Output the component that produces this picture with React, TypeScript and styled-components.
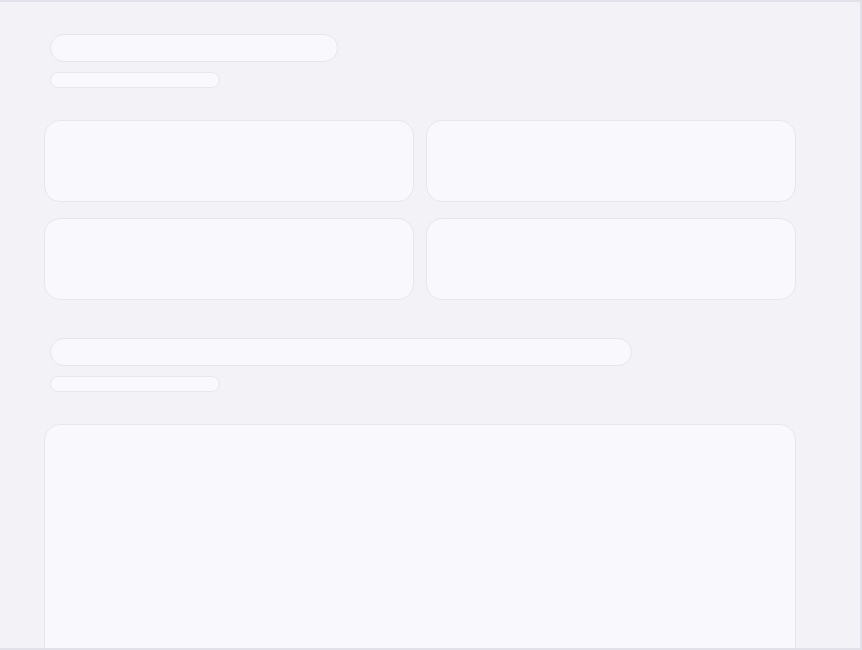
import React from 'react'
import styled, { createGlobalStyle } from 'styled-components'

const GlobalStyle = createGlobalStyle`
  html, body {
    margin: 0;
    padding: 0;
    background: #f3f2f7;
    font-family: 'Inter', 'Noto Sans', sans-serif;
  }
`

const Frame = styled.div`
  box-sizing: border-box;
  width: 862px;
  height: 650px;
  overflow: hidden;
  background: #f3f2f7;
  border-top: 2px solid #e2e1e9;
  border-right: 2px solid #e2e1e9;
  border-bottom: 2px solid #e2e1e9;
  padding: 32px 64px 0 44px;
  display: flex;
  flex-direction: column;
`

const Header = styled.div`
  display: flex;
  flex-direction: column;
  gap: 10px;
  padding: 0 6px;
`

const Pill = styled.div<{ $width: number; $height: number }>`
  box-sizing: border-box;
  width: ${({ $width }) => $width}px;
  height: ${({ $height }) => $height}px;
  border-radius: ${({ $height }) => $height / 2}px;
  background: #f9f8fd;
  border: 1px solid #e7e6ed;
`

const CardGrid = styled.div`
  display: grid;
  grid-template-columns: 1fr 1fr;
  column-gap: 12px;
  row-gap: 16px;
  margin-top: 32px;
  margin-bottom: 38px;
`

const Card = styled.div<{ $height: number }>`
  box-sizing: border-box;
  height: ${({ $height }) => $height}px;
  background: #f9f8fd;
  border: 1px solid #e7e6ed;
  border-radius: 16px;
  flex-shrink: 0;
`

const Panel = styled(Card)`
  margin-top: 32px;
`

const App: React.FunctionComponent = () => {
  return (
    <>
      <GlobalStyle />
      <Frame>
        <Header>
          <Pill $width={288} $height={28} />
          <Pill $width={170} $height={16} />
        </Header>
        <CardGrid>
          {[0, 1, 2, 3].map((index) => (
            <Card key={index} $height={82} />
          ))}
        </CardGrid>
        <Header>
          <Pill $width={582} $height={28} />
          <Pill $width={170} $height={16} />
        </Header>
        <Panel $height={400} />
      </Frame>
    </>
  )
}

export default App
